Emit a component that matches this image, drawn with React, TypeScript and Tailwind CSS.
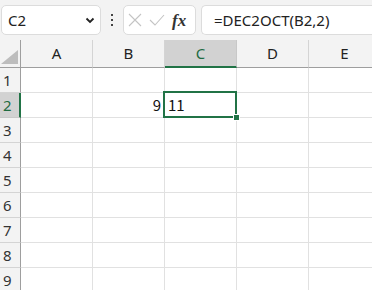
import React from 'react';

const COLS = ['A', 'B', 'C', 'D', 'E'];
const ROWS = [1, 2, 3, 4, 5, 6, 7, 8, 9];

export default function App() {
  return (
    <div className="w-[372px] h-[290px] overflow-hidden bg-white relative font-['Noto_Sans','Liberation_Sans',sans-serif]">
      {/* Toolbar */}
      <div className="h-[40px] bg-[#f3f3f3] flex items-start pt-[5px]">
        <div className="ml-[1px] w-[100px] shrink-0 h-[30px] bg-white border border-[#dcdcdc] rounded-[5px] flex items-center justify-between pl-[6px] pr-[5px]">
          <span className="text-[15px] text-[#222] leading-none">C2</span>
          <svg width="10" height="7" viewBox="0 0 10 7">
            <path d="M1.5 1.5 L5 5 L8.5 1.5" fill="none" stroke="#222" strokeWidth="1.8" />
          </svg>
        </div>
        <div className="w-[22px] shrink-0 h-[30px] flex flex-col items-center justify-center gap-[3px]">
          <div className="w-[2px] h-[2px] bg-[#444]" />
          <div className="w-[2px] h-[2px] bg-[#444]" />
          <div className="w-[2px] h-[2px] bg-[#444]" />
        </div>
        <div className="w-[73px] shrink-0 h-[30px] bg-white border border-[#dcdcdc] rounded-[5px] flex items-center pl-[4px] gap-[7px]">
          <svg width="14" height="14" viewBox="0 0 14 14">
            <path d="M1 1 L13 13 M13 1 L1 13" stroke="#c4c4c4" strokeWidth="1.1" />
          </svg>
          <svg width="16" height="12" viewBox="0 0 16 12">
            <path d="M1 6 L6 11 L15 1" fill="none" stroke="#c4c4c4" strokeWidth="1.1" />
          </svg>
          <span className="text-[17px] italic font-bold text-[#333] leading-none font-['Liberation_Serif',serif]">fx</span>
        </div>
        <div className="ml-[5px] flex-1 h-[30px] bg-white border border-r-0 border-[#dcdcdc] rounded-l-[5px] flex items-center pl-[12px]">
          <span className="text-[15px] text-[#222] leading-none">=DEC2OCT(B2,2)</span>
        </div>
      </div>

      {/* Column headers */}
      <div className="flex h-[28px] bg-[#f3f3f3]">
        <div className="w-[21px] shrink-0 h-full border-r border-b border-[#9e9e9e] relative">
          <svg width="17" height="14" viewBox="0 0 17 14" className="absolute left-[1px] bottom-[3px]">
            <path d="M0 14 L17 14 L17 0 Z" fill="#bdbdbd" />
          </svg>
        </div>
        {COLS.map((c) => (
          <div
            key={c}
            className={
              c === 'C'
                ? 'w-[72px] shrink-0 h-full bg-[#d2d2d2] border-r border-[#c8c8c8] border-b-2 border-b-[#217346] flex items-center justify-center text-[15px] text-[#1e6b41]'
                : 'w-[72px] shrink-0 h-full border-r border-[#d4d4d4] border-b border-b-[#9e9e9e] flex items-center justify-center text-[15px] text-[#222]'
            }
          >
            {c}
          </div>
        ))}
      </div>

      {/* Rows */}
      {ROWS.map((r) => (
        <div key={r} className="flex h-[25px]">
          <div
            className={
              r === 2
                ? 'w-[21px] shrink-0 h-full bg-[#d2d2d2] border-r-2 border-r-[#217346] border-b border-[#c8c8c8] flex items-center pl-[3px] text-[15px] text-[#1e6b41]'
                : 'w-[21px] shrink-0 h-full bg-[#f3f3f3] border-r border-r-[#9e9e9e] border-b border-[#d4d4d4] flex items-center pl-[3px] text-[15px] text-[#333]'
            }
          >
            {r}
          </div>
          {COLS.map((c) => (
            <div
              key={c}
              className="w-[72px] shrink-0 h-full border-r border-b border-[#e1e1e1] flex items-center px-[3px] text-[15px] text-[#111] font-['Noto_Sans_CJK_JP','Noto_Sans',sans-serif]"
            >
              {r === 2 && c === 'B' && <span className="ml-auto">9</span>}
              {r === 2 && c === 'C' && <span>11</span>}
            </div>
          ))}
        </div>
      ))}

      {/* Selection */}
      <div className="absolute left-[163px] top-[91px] w-[74px] h-[27px] border-2 border-[#217346] pointer-events-none" />
      <div className="absolute left-[234px] top-[115px] w-[5px] h-[5px] bg-[#217346] outline outline-1 outline-white" />
    </div>
  );
}
